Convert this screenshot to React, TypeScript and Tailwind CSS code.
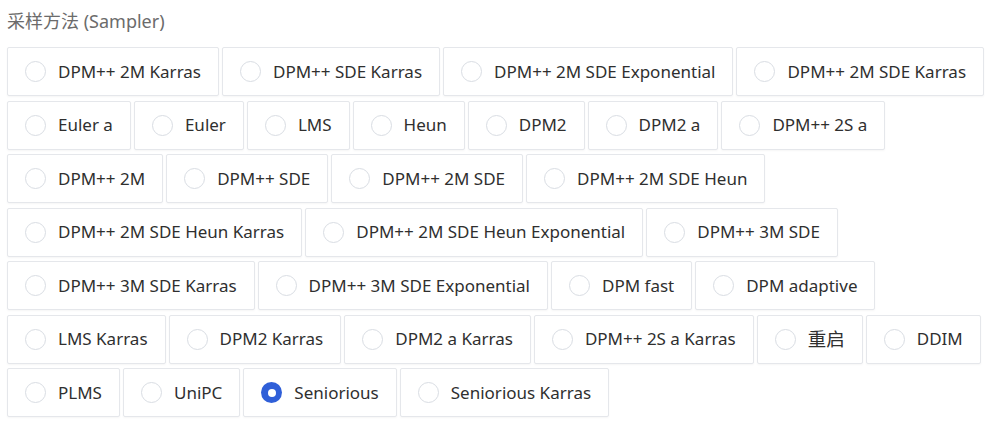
const samplers = [
  'DPM++ 2M Karras',
  'DPM++ SDE Karras',
  'DPM++ 2M SDE Exponential',
  'DPM++ 2M SDE Karras',
  'Euler a',
  'Euler',
  'LMS',
  'Heun',
  'DPM2',
  'DPM2 a',
  'DPM++ 2S a',
  'DPM++ 2M',
  'DPM++ SDE',
  'DPM++ 2M SDE',
  'DPM++ 2M SDE Heun',
  'DPM++ 2M SDE Heun Karras',
  'DPM++ 2M SDE Heun Exponential',
  'DPM++ 3M SDE',
  'DPM++ 3M SDE Karras',
  'DPM++ 3M SDE Exponential',
  'DPM fast',
  'DPM adaptive',
  'LMS Karras',
  'DPM2 Karras',
  'DPM2 a Karras',
  'DPM++ 2S a Karras',
  '重启',
  'DDIM',
  'PLMS',
  'UniPC',
  'Seniorious',
  'Seniorious Karras',
];

export default function App() {
  const selected = 'Seniorious';

  return (
    <div
      className="min-h-[421px] w-[997px] bg-white pl-[7px] pt-[7px]"
      style={{ fontFamily: '"Noto Sans", "Noto Sans CJK SC", sans-serif' }}
    >
      <div className="mb-[12px] text-[18px] leading-[28px] text-[#6b6b6b]">采样方法 (Sampler)</div>
      <div className="flex w-[984px] flex-wrap gap-x-[3px] gap-y-[4.5px]">
        {samplers.map((name) => {
          const active = name === selected;
          const cjk = /[\u4e00-\u9fff]/.test(name);
          return (
            <label
              key={name}
              className="flex h-[49px] items-center gap-[12px] rounded-[2px] border border-[#e5e7eb] bg-white px-[17px] text-[17px] text-[#2f2f2f] shadow-[0_1px_2px_rgba(0,0,0,0.04)]"
            >
              {active ? (
                <span className="flex h-[21px] w-[21px] items-center justify-center rounded-full bg-[#2f5fd8]">
                  <span className="h-[8px] w-[8px] rounded-full bg-white" />
                </span>
              ) : (
                <span className="h-[21px] w-[21px] rounded-full border border-[#d9dde3] bg-white" />
              )}
              <span className={cjk ? 'text-[18.5px]' : ''}>{name}</span>
            </label>
          );
        })}
      </div>
    </div>
  );
}
